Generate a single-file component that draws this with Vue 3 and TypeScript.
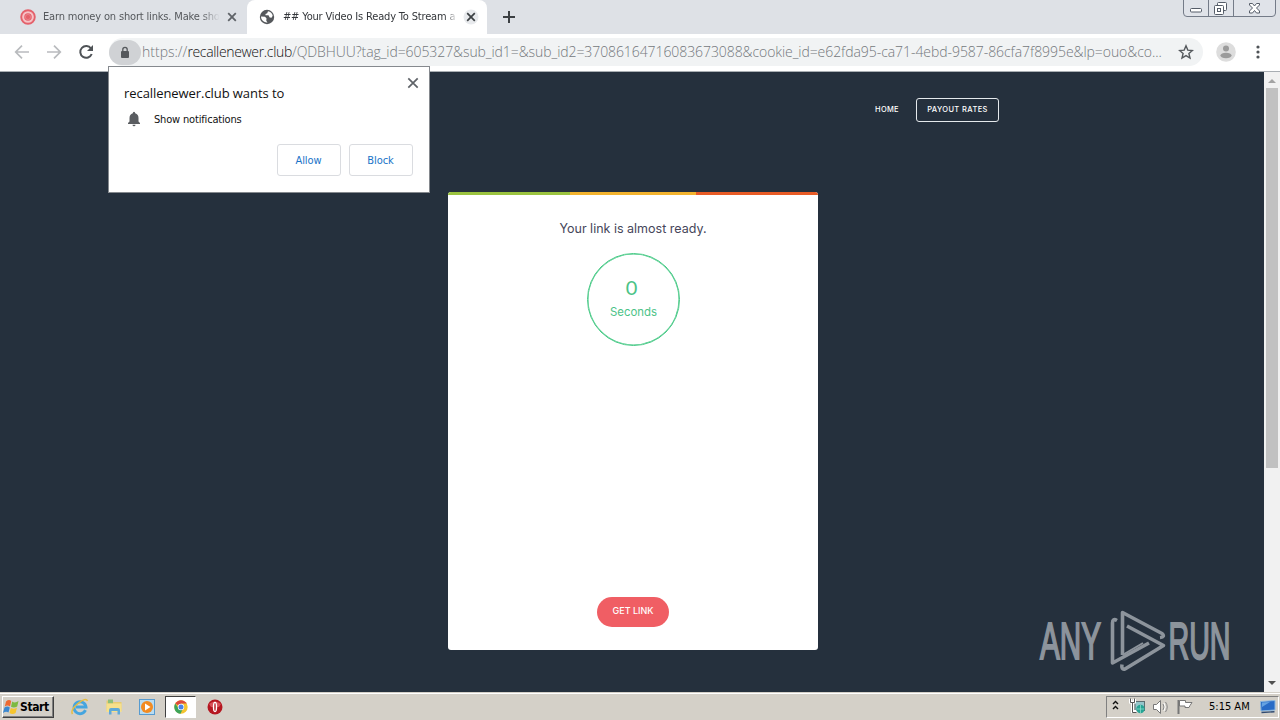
<script setup lang="ts">
const address = {
  scheme: 'https://',
  host: 'recallenewer.club',
  query: '/QDBHUU?tag_id=605327&sub_id1=&sub_id2=37086164716083673088&cookie_id=',
  tail: 'e62fda95-ca71-4ebd-9587-86cfa7f8995e&lp=ouo&co...',
}
const actions: string[] = ['Allow', 'Block']
</script>

<template>
  <div class="screen">
    <header class="tabs">
      <div class="tab first">
        <svg class="fav" width="16" height="16" viewBox="0 0 16 16"><circle cx="8" cy="8" r="6.8" fill="#f6c3c7" stroke="#e4616b" stroke-width="1.9" /><circle cx="8" cy="8" r="3.8" fill="#e4616b" /><circle cx="8" cy="8" r="2.6" fill="none" stroke="#ed8990" stroke-width=".7" /></svg>
        <span class="title t1">Earn money on short links. Make sho</span>
        <svg class="close" width="16" height="16" viewBox="0 0 16 16"><path d="M4.2 4.2l7.6 7.6M11.8 4.2l-7.6 7.6" stroke="#5f6368" stroke-width="1.8" /></svg>
      </div>
      <div class="tab active">
        <svg class="fav" width="16" height="16" viewBox="0 0 16 16"><circle cx="8" cy="8" r="7.2" fill="#55585c" /><path d="M2 7.5l4 .2 1.5 1.6-.2 2.5 1.2 1.9-2.8-.6C3.200 12 2 10 2 7.500zM9 2.200l-.8 2L6.500 5v1.300h3l1.200 2.200 1.800.2 1.200-2C13.200 4.200 11.500 2.700 9 2.200z" fill="#fff" /></svg>
        <span class="title t2">## Your Video Is Ready To Stream a</span>
        <svg class="close" width="16" height="16" viewBox="0 0 16 16"><circle cx="8" cy="8" r="7.500" fill="#e8eaed" /><path d="M4.200 4.200l7.600 7.600M11.800 4.200l-7.600 7.600" stroke="#3c4043" stroke-width="1.700" /></svg>
      </div>
      <svg class="plus" width="14" height="14" viewBox="0 0 14 14"><path d="M7 1v12M1 7h12" stroke="#3c4043" stroke-width="2" /></svg>
      <svg class="window" width="94" height="18" viewBox="0 0 94 18">
        <path d="M.5 0V13Q.5 16.500 4 16.500H89Q92.500 16.500 92.500 13V0M25.500 0v16M50.500 0v16" fill="#e0e3e9" stroke="#747b88" />
        <g fill="#fff" stroke="#555c68"><rect x="7.500" y="8.500" width="11" height="3.500" rx="1" /><rect x="34.500" y="2.500" width="9" height="8" rx="1" /><rect x="31.500" y="5.500" width="9" height="9" rx="1" /><rect x="34.500" y="8.500" width="3" height="3" /><path d="M66.500 3.500h3l2 2.500 2-2.500h3v1.500l-3 3 3 3v2h-3l-2-2.500-2 2.500h-3v-2l3-3-3-3z" /></g>
      </svg>
    </header>

    <div class="toolbar">
      <svg class="nav" width="96" height="38" viewBox="0 0 96 38" fill="none">
        <path d="M29 18H16M22 11.700L15.700 18 22 24.300M47 18h13M54 11.700l6.300 6.300-6.300 6.300" stroke="#b9bbbe" stroke-width="1.700" />
        <path d="M91 14.500A5.900 5.900 0 1 0 91.700 20" stroke="#4f5357" stroke-width="2" /><path d="M93 11v6h-6z" fill="#4f5357" />
      </svg>
      <div class="omnibox">
        <span class="lock"><svg width="10" height="13" viewBox="0 0 10 13"><rect x="1" y="5" width="8" height="7" rx="1" fill="#55585c" /><path d="M2.800 5V3.500a2.200 2.200 0 0 1 4.400 0V5" fill="none" stroke="#55585c" stroke-width="1.300" /></svg></span>
        <span class="url">{{ address.scheme }}<b>{{ address.host }}</b><span class="query">{{ address.query }}</span><span class="tail">{{ address.tail }}</span></span>
        <svg class="star" width="16" height="16" viewBox="0 0 16 16"><path d="M8 1.800l1.800 4.300 4.600.4-3.500 3 1.100 4.500-4-2.400L4 14l1.100-4.500-3.500-3 4.600-.4z" fill="none" stroke="#55595d" stroke-width="1.400" /></svg>
      </div>
      <svg class="avatar" width="20" height="20" viewBox="0 0 20 20"><circle cx="10" cy="10" r="9.800" fill="#dddddd" /><circle cx="10" cy="6.500" r="3" fill="#9b9b9b" /><ellipse cx="10" cy="13.500" rx="5.600" ry="2.800" fill="#9b9b9b" /></svg>
      <svg class="dots" width="4" height="16" viewBox="0 0 4 16" fill="#4f5357"><circle cx="2" cy="3" r="1.600" /><circle cx="2" cy="8" r="1.600" /><circle cx="2" cy="13" r="1.600" /></svg>
    </div>

    <main class="viewport">
      <div class="site">
        <nav class="menu"><span class="home">HOME</span><span class="payout">PAYOUT RATES</span></nav>
        <section class="card">
          <div class="stripe"><i /><i /><i /></div>
          <p class="ready">Your link is almost ready.</p>
          <div class="timer"><span class="count">0</span><span class="unit">Seconds</span></div>
          <button class="get">GET LINK</button>
        </section>
        <svg class="brand" width="204" height="68" viewBox="0 0 204 68" fill="#8d949c" stroke="#8d949c">
          <g font-family="Liberation Sans, sans-serif" font-size="51" stroke-width="2">
            <text x="4" y="49.500" textLength="61" lengthAdjust="spacingAndGlyphs">ANY</text>
            <text x="132.500" y="49.500" textLength="62" lengthAdjust="spacingAndGlyphs">RUN</text>
          </g>
          <g fill="none" stroke-width="3.600" stroke-linejoin="round">
            <path d="M81 11.500Q76.500 9 76.500 14V54L113 34" />
            <path d="M86.500 46V3.500L126 24.500Q129.500 28 124 28.500" />
            <path d="M91 17L127.500 36.500 89 60Q85 61 86 55.500" />
            <path d="M86.500 46L107 34" stroke-width="2" />
          </g>
        </svg>
      </div>
      <aside class="scroll"><i class="up" /><i class="thumb" /><i class="down" /></aside>
    </main>

    <footer class="taskbar">
      <div class="start">
        <svg width="17" height="16" viewBox="0 0 17 16"><path d="M3 2.500Q6-.2 8.200 2L7 7.500Q4.500 5.500 1.800 7.500z" fill="#ee6a32" /><path d="M9.200 2.500Q12 4.500 15.500 2l-1.300 5.500Q11 9.500 8 7.800z" fill="#7dba42" /><path d="M1.500 8.500Q4.500 6.300 6.800 8.500L5.500 13.500Q3 12-.1 14z" fill="#3c88d0" /><path d="M7.800 9Q11 10.700 14 8.500L12.600 14Q9.500 16 6.500 14z" fill="#f6c52e" /></svg>
        <span>Start</span>
      </div>
      <svg class="app ie" width="18" height="18" viewBox="0 0 18 18" fill="none"><path d="M14.500 12.200A6 6 0 1 1 15 9H5" stroke="#45a5df" stroke-width="2.900" /><path d="M1.500 16Q-1 12 7 5.500T16.500 3" stroke="#e7bd42" stroke-width="1.500" /></svg>
      <svg class="app folder" width="18" height="18" viewBox="0 0 18 18"><path d="M1.500 2.500h6l1 1.500h8V13h-15z" fill="#e8cc70" /><path d="M3 1.500h5v4H3z" fill="#8fbf79" /><path d="M1.500 5.500h15V14h-15z" fill="#f6e08c" /><path d="M4 16.500V12q0-2 2-2h7q2 0 2 2v4.500h-2.500V13h-6v3.500z" fill="#5ea9d8" /></svg>
      <svg class="app media" width="18" height="18" viewBox="0 0 18 18"><rect x="1.500" y="1.500" width="15" height="15" fill="#b9dcf1" stroke="#579bd0" /><circle cx="9" cy="9" r="6" fill="#f28b22" /><path d="M7 5.500v7l5.500-3.500z" fill="#fff" /></svg>
      <div class="running">
        <svg width="14" height="14" viewBox="0 0 14 14"><circle cx="7" cy="7" r="6.700" fill="#f4c430" /><path d="M7 7L1.200 3.600A6.700 6.700 0 0 1 12.800 3.600H7z" fill="#dd4a3d" /><path d="M1.200 3.600A6.700 6.700 0 0 0 6.500 13.700L9 8.500 4.500 8.300z" fill="#3da45a" /><circle cx="7" cy="7" r="3.200" fill="#fff" /><circle cx="7" cy="7" r="2.500" fill="#4a82e8" /></svg>
      </div>
      <svg class="app opera" width="16" height="16" viewBox="0 0 16 16"><circle cx="8" cy="8" r="7.500" fill="#b51620" /><path d="M2 5Q8 0 14 5L12 8H4z" fill="#d85058" /><ellipse cx="8" cy="8" rx="2.200" ry="5.200" fill="#fff" /><ellipse cx="8" cy="8" rx=".8" ry="4" fill="#bb252d" /></svg>
      <div class="tray">
        <svg width="87" height="20" viewBox="0 0 87 20" fill="none">
          <path d="M6 7L8.500 4.500 11 7M6 12L8.500 9.500l2.500 2.500" stroke="#111" stroke-width="1.400" />
          <rect x="28" y="4.500" width="9.500" height="9" fill="#95c6cb" stroke="#5d6e72" /><path d="M23.500 2v3h4V2M25.500 5v9.500h4" stroke="#fff" stroke-width="3" /><path d="M23.500 1.500v4h4v-4M25.500 5.500v10h4" stroke="#555" /><circle cx="33.500" cy="12" r="4.200" fill="#26a494" /><path d="M30 12h7M33.500 8v8" stroke="#8bdbcc" stroke-width=".8" />
          <path d="M46.500 7.500h3l4-4v13l-4-4h-3z" fill="#fff" stroke="#777" /><path d="M56 7q2 3 0 6M58.500 5q3.500 5 0 10" stroke="#888" /><path d="M57 6q2.500 4 0 8" stroke="#fff" />
          <path d="M71.500 3v14" stroke="#777" stroke-width="2" /><path d="M72.500 3.500h6v2h6.500l-2 3 -1 2h-4v-1.500h-5.500z" fill="#fff" stroke="#777" />
        </svg>
        <span class="clock">5:15 AM</span>
        <svg class="desk" width="16" height="16" viewBox="0 0 16 16"><path d="M.5 2.500L15 1.500V11L1 12z" fill="#286bc6" stroke="#8db8df" /><path d="M2 3.500l8-.5-8 5z" fill="#65a3e2" /><path d="M1.500 13.500l13-.8" stroke="#304b71" stroke-width="1.400" /></svg>
      </div>
    </footer>

    <div class="prompt">
      <svg class="dismiss" width="12" height="12" viewBox="0 0 12 12"><path d="M1.300 1.300l9.400 9.400M10.700 1.300l-9.400 9.400" stroke="#5f6368" stroke-width="1.700" /></svg>
      <h1>recallenewer.club wants to</h1>
      <div class="permission">
        <svg width="14" height="16" viewBox="0 0 14 16"><path d="M7 .7q1.200 0 1.200 1.500Q11.500 3.200 11.500 7v3.500L13 12v.9H1V12l1.500-1.500V7q0-3.800 3.300-4.800Q5.800.7 7 .7zM5.500 13.700h3q0 1.500-1.500 1.500t-1.500-1.500z" fill="#5a5d61" /></svg>
        <span>Show notifications</span>
      </div>
      <div class="actions"><button v-for="a in actions" :key="a">{{ a }}</button></div>
    </div>
  </div>
</template>

<style>
body { overflow: hidden; }
</style>
<style scoped>
* { box-sizing: border-box; }
svg { display: block; flex: none; }
.screen { position: relative; width: 1280px; height: 720px; display: flex; flex-direction: column; overflow: hidden; font-family: "DejaVu Sans Condensed", "DejaVu Sans", sans-serif; font-stretch: condensed; }
.tabs { height: 34px; background: #dee1e6; display: flex; align-items: flex-start; flex: none; }
.tab { height: 34px; display: flex; align-items: center; }
.first { width: 247px; padding-left: 20px; }
.active { width: 240px; background: #fff; border-radius: 8px 8px 0 0; padding-left: 12px; }
.title { white-space: nowrap; font-size: 11px; line-height: 18px; flex: none; }
.t1 { width: 180px; margin-left: 7px; color: #55585c; letter-spacing: -.16px; mask-image: linear-gradient(90deg, #000 88%, transparent 98%); }
.t2 { width: 178px; margin-left: 8px; color: #33363a; letter-spacing: -.17px; mask-image: linear-gradient(90deg, #000 91%, transparent 98%); }
.first .close { margin-left: 1px; }
.active .close { margin-left: 2px; }
.plus { margin: 10px 0 0 15px; }
.window { margin-left: auto; margin-right: 3px; }
.toolbar { height: 38px; flex: none; display: flex; align-items: flex-start; background: #fff; border-bottom: 1px solid #a9aeb3; }
.nav { margin-right: 13px; }
.omnibox { width: 1094px; height: 28px; margin-top: 4px; border-radius: 14px; background: #f1f3f4; display: flex; align-items: center; }
.lock { width: 32px; height: 25px; border-radius: 13px; background: #d0d2d5; display: grid; place-items: center; flex: none; }
.url { width: 1023px; white-space: nowrap; color: #74787c; font: 300 14px/24px "Open Sans", sans-serif; margin-left: 1px; flex: none; }
.url b { color: #111; font-weight: 300; letter-spacing: -.33px; }
.query { letter-spacing: -.08px; }
.tail { letter-spacing: -.06px; }
.star { margin-left: 13px; }
.avatar { margin: 8px 0 0 13px; }
.dots { margin: 10px 0 0 20px; }
.viewport { height: 620px; flex: none; display: flex; }
.site { position: relative; width: 1264px; background: #25303d; display: flex; flex-direction: column; }
.menu { display: flex; align-items: center; height: 24px; margin: 26px 0 0 875px; color: #fff; font: 500 7.500px/12px Inter, sans-serif; }
.home { width: 41px; letter-spacing: .3px; }
.payout { width: 83px; height: 24px; border: 1px solid #e5e9ec; border-radius: 3px; display: grid; place-items: center; letter-spacing: .4px; }
.card { width: 370px; height: 458px; margin: 70px 0 0 448px; background: #fff; border-radius: 3px; overflow: hidden; display: flex; flex-direction: column; align-items: center; }
.stripe { width: 370px; height: 3px; display: grid; grid-template-columns: 122px 126px 122px; flex: none; }
.stripe i:nth-child(1) { background: #9bc33f; }
.stripe i:nth-child(2) { background: #f3b32e; }
.stripe i:nth-child(3) { background: #e85b26; }
.ready { margin: 24px 0 0; font: 400 12.500px/20px Inter, sans-serif; color: #46465a; }
.timer { width: 93px; height: 93px; margin: 14px 0 0 1px; border: 1px solid #43c883; box-shadow: inset 0 0 0 .5px #43c883; border-radius: 50%; display: flex; flex-direction: column; align-items: center; color: #4cc387; }
.count { margin: 21px 4px 0 0; font: 400 20px/24px Lato, sans-serif; }
.unit { font: 400 11.400px/20px Inter, sans-serif; margin-top: 3px; }
.get { width: 72px; height: 30px; margin-top: auto; margin-bottom: 23px; border: 0; border-radius: 15px; background: #f05e64; color: #fff; font: 500 9px/28px Inter, sans-serif; padding: 0 0 2px; }
.brand { position: absolute; left: 1036px; top: 537px; }
.scroll { width: 16px; background: #f1f1f1; display: flex; flex-direction: column; align-items: center; }
.up { border: 4px solid transparent; border-top: 0; border-bottom-color: #a3a3a3; margin: 7px 0 5px; }
.thumb { width: 12px; height: 380px; background: #c1c1c1; }
.down { border: 4px solid transparent; border-bottom: 0; border-top-color: #505050; margin-top: auto; margin-bottom: 7px; }
.taskbar { height: 28px; flex: none; background: #d4d0c8; border-top: 1px solid #d4d0c8; box-shadow: inset 0 1px #fff; display: flex; align-items: center; padding-top: 1px; }
.start { width: 52px; height: 22px; margin-left: 2px; border: 1px solid; border-color: #fff #404040 #404040 #fff; box-shadow: inset -1px -1px #808080; display: flex; align-items: center; font: bold 12px/18px "DejaVu Sans Condensed", sans-serif; font-stretch: condensed; letter-spacing: -.4px; color: #000; }
.ie { margin-left: 17px; }
.folder { margin-left: 16px; }
.media { margin-left: 15px; }
.running { width: 31px; height: 22px; margin-left: 9px; background: #fff; border: 1px solid; border-color: #404040 #fff #fff #404040; display: grid; place-items: center; }
.opera { margin-left: 11px; }
.tray { width: 173px; height: 22px; margin: 0 1px 0 auto; border: 1px solid; border-color: #808080 #fff #fff #808080; display: flex; align-items: center; }
.clock { width: 44px; margin-left: 15px; font-size: 11px; line-height: 18px; white-space: nowrap; color: #000; }
.desk { margin-left: 7px; }
.prompt { position: absolute; left: 108px; top: 66px; width: 322px; height: 127px; border: 1px solid #85898e; background: #fff; padding: 15px 16px 16px 15px; }
.dismiss { position: absolute; top: 10px; right: 10px; }
h1 { margin: 0; font: 400 13px/22px "Open Sans", sans-serif; letter-spacing: -.07px; color: #111; }
.permission { height: 20px; margin-top: 5px; display: flex; align-items: center; padding-left: 3px; font-size: 11px; letter-spacing: -.17px; color: #111; }
.permission span { margin-left: 13px; }
.actions { display: flex; justify-content: flex-end; gap: 8px; margin-top: 15px; }
.actions button { width: 64px; height: 32px; padding: 1px 1px 0 0; border: 1px solid #dadce0; border-radius: 3px; background: #fff; color: #1a73c8; font: 11px/18px "DejaVu Sans Condensed", sans-serif; font-stretch: condensed; letter-spacing: -.1px; }
</style>
